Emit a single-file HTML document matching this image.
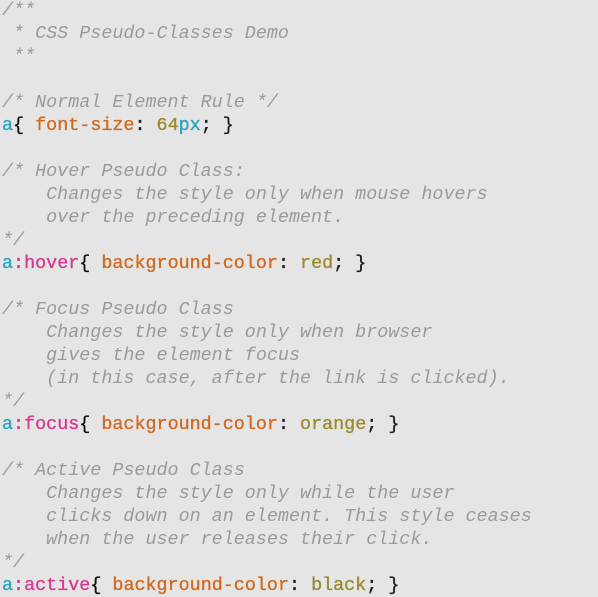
<!DOCTYPE html>
<html><head><style>
html,body{margin:0;padding:0;background:#e5e5e5;width:598px;height:597px;overflow:hidden}
pre{margin:0;padding:0 0 0 2px;font-family:"Liberation Mono",monospace;font-size:18.4px;line-height:23px;color:#222;position:relative;top:-1px;-webkit-text-stroke:0.35px currentColor}
.c{color:#9a9a9a;font-style:italic;-webkit-text-stroke:0}
.s{color:#22a7c2}
.p{color:#d63a8f}
.k{color:#d2691e}
.v{color:#9a8a2e}
.b{color:#111}
</style></head><body><pre><span class="c">/**
 * CSS Pseudo-Classes Demo
 **
</span>
<span class="c">/* Normal Element Rule */</span>
<span class="s">a</span><span class="b">{</span> <span class="k">font-size</span>: <span class="v">64</span><span class="s">px</span>; }

<span class="c">/* Hover Pseudo Class:
    Changes the style only when mouse hovers
    over the preceding element.
*/</span>
<span class="s">a</span><span class="p">:hover</span><span class="b">{</span> <span class="k">background-color</span>: <span class="v">red</span>; }

<span class="c">/* Focus Pseudo Class
    Changes the style only when browser
    gives the element focus
    (in this case, after the link is clicked).
*/</span>
<span class="s">a</span><span class="p">:focus</span><span class="b">{</span> <span class="k">background-color</span>: <span class="v">orange</span>; }

<span class="c">/* Active Pseudo Class
    Changes the style only while the user
    clicks down on an element. This style ceases
    when the user releases their click.
*/</span>
<span class="s">a</span><span class="p">:active</span><span class="b">{</span> <span class="k">background-color</span>: <span class="v">black</span>; }</pre></body></html>
